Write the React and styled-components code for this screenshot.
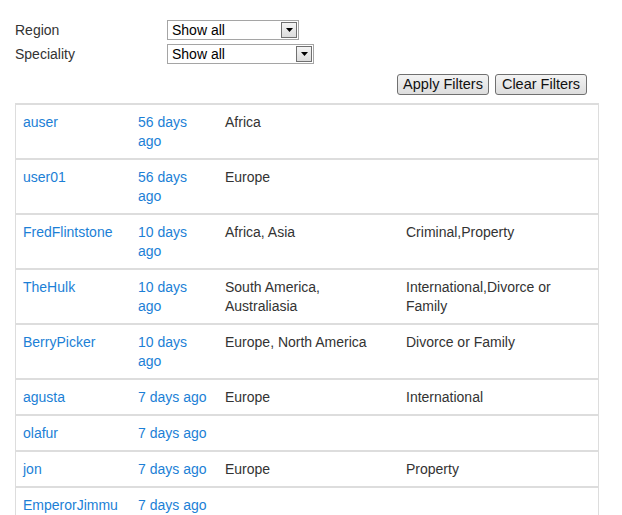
import React from "react";
import styled, { createGlobalStyle } from "styled-components";

const GlobalStyle = createGlobalStyle`
  html, body {
    margin: 0;
    padding: 0;
    background: #ffffff;
  }
  body {
    font-family: "Liberation Sans", Arial, sans-serif;
    font-size: 14px;
    color: #333333;
  }
`;

const Page = styled.div`
  padding: 20px 0 0 15px;
`;

const Filters = styled.div`
  display: grid;
  grid-template-columns: 152px auto;
  row-gap: 4px;
  align-items: center;
  justify-items: start;
`;

const FilterLabel = styled.label`
  font-size: 14px;
  line-height: 20px;
  color: #333333;
`;

const SelectBox = styled.div`
  box-sizing: border-box;
  display: inline-flex;
  align-items: stretch;
  width: ${(p) => p.$width}px;
  height: 20px;
  border: 1px solid #a5a5a5;
  background: #ffffff;
`;

const NativeSelect = styled.select`
  appearance: none;
  -webkit-appearance: none;
  flex: 1;
  min-width: 0;
  border: none;
  outline: none;
  background: transparent;
  font-family: "Liberation Sans", Arial, sans-serif;
  font-size: 14px;
  color: #000000;
  padding: 0 0 0 4px;
  margin: 0;
  line-height: 18px;
`;

const ArrowButton = styled.span`
  box-sizing: border-box;
  width: 16px;
  margin: 1px;
  border: 1px solid #707070;
  background: linear-gradient(#f4f4f4, #dcdcdc);
  display: flex;
  align-items: center;
  justify-content: center;
`;

const ButtonBar = styled.div`
  box-sizing: border-box;
  width: 584px;
  display: flex;
  justify-content: flex-end;
  gap: 6px;
  padding-right: 12px;
  margin-top: 10px;
`;

const Button = styled.button`
  box-sizing: border-box;
  width: 92px;
  height: 21px;
  padding: 0;
  border: 1px solid #707070;
  border-radius: 3px;
  background: linear-gradient(#f3f3f3, #dddddd);
  font-family: "Liberation Sans", Arial, sans-serif;
  font-size: 14.5px;
  color: #111111;
  line-height: 19px;
`;

const DataTable = styled.table`
  margin-top: 8px;
  width: 584px;
  table-layout: fixed;
  border-collapse: separate;
  border-spacing: 0;
  border-left: 1px solid #dddddd;
  border-right: 1px solid #dddddd;
`;

const Col = styled.col`
  width: ${(p) => (p.$width ? `${p.$width}px` : "auto")};
`;

const Cell = styled.td`
  box-sizing: border-box;
  vertical-align: top;
  border-top: 2px solid #dddddd;
  padding: 8px 7px 7px 7px;
  line-height: 19px;
  font-size: 14px;
  color: #333333;
`;

const Link = styled.a`
  color: #1c7fd6;
  text-decoration: none;
  cursor: pointer;
`;

const rows = [
  ["auser", "56 days ago", "Africa", ""],
  ["user01", "56 days ago", "Europe", ""],
  ["FredFlintstone", "10 days ago", "Africa, Asia", "Criminal,Property"],
  ["TheHulk", "10 days ago", "South America, Australiasia", "International,Divorce or Family"],
  ["BerryPicker", "10 days ago", "Europe, North America", "Divorce or Family"],
  ["agusta", "7 days ago", "Europe", "International"],
  ["olafur", "7 days ago", "", ""],
  ["jon", "7 days ago", "Europe", "Property"],
  ["EmperorJimmu", "7 days ago", "", ""],
];

function Select({ width }) {
  return (
    <SelectBox $width={width}>
      <NativeSelect defaultValue="all">
        <option value="all">Show all</option>
      </NativeSelect>
      <ArrowButton>
        <svg width="7" height="4" viewBox="0 0 7 4">
          <polygon points="0,0 7,0 3.5,4" fill="#000" />
        </svg>
      </ArrowButton>
    </SelectBox>
  );
}

export default function App() {
  return (
    <>
      <GlobalStyle />
      <Page>
        <Filters>
          <FilterLabel>Region</FilterLabel>
          <Select width={132} />
          <FilterLabel>Speciality</FilterLabel>
          <Select width={147} />
        </Filters>
        <ButtonBar>
          <Button type="button">Apply Filters</Button>
          <Button type="button">Clear Filters</Button>
        </ButtonBar>
        <DataTable>
          <colgroup>
            <Col $width={115} />
            <Col $width={87} />
            <Col $width={181} />
            <Col />
          </colgroup>
          <tbody>
            {rows.map(([user, when, region, spec]) => (
              <tr key={user}>
                <Cell>
                  <Link>{user}</Link>
                </Cell>
                <Cell>
                  <Link>{when}</Link>
                </Cell>
                <Cell>{region}</Cell>
                <Cell>{spec}</Cell>
              </tr>
            ))}
          </tbody>
        </DataTable>
      </Page>
    </>
  );
}
